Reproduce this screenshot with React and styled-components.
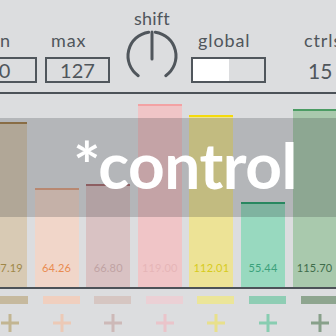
import React from "react";
import styled, { createGlobalStyle } from "styled-components";

const GlobalStyle = createGlobalStyle`
  html, body { margin: 0; padding: 0; background: #dcdddf; }
  body { font-family: "Lato", "Noto Sans", sans-serif; color: #50565c; }
`;

const Frame = styled.div`
  width: 336px;
  height: 336px;
  overflow: hidden;
  background: #dcdddf;
`;

const Header = styled.div`
  display: flex;
  align-items: flex-start;
  height: 92px;
  margin-left: -28px;
`;

const Group = styled.div`
  display: flex;
  flex-direction: column;
  align-items: ${(p) => (p.$center ? "center" : "flex-start")};
  padding-top: ${(p) => p.$top}px;
  margin-left: ${(p) => p.$gap}px;
  width: ${(p) => p.$w}px;
  flex: none;
`;

const Label = styled.div`
  font-size: 18px;
  line-height: 18px;
  height: 18px;
  color: #50565c;
  letter-spacing: ${(p) => p.$ls ?? 0.9}px;
  padding-left: ${(p) => p.$indent || 0}px;
  white-space: nowrap;
`;

const NumBox = styled.div`
  box-sizing: border-box;
  margin-top: 8px;
  width: ${(p) => p.$w}px;
  height: 26px;
  border: 2px solid #50565c;
  display: flex;
  align-items: center;
  justify-content: center;
  font-size: 20px;
  color: #50565c;
`;

const PlainNum = styled.div`
  margin-top: 8px;
  height: 26px;
  padding-left: 4px;
  display: flex;
  align-items: center;
  font-size: 21px;
  color: #50565c;
`;

const Toggle = styled.div`
  box-sizing: border-box;
  margin-top: 8px;
  width: 75px;
  height: 26px;
  border: 2px solid #50565c;
  display: flex;
`;

const ToggleHalf = styled.div`
  flex: 1;
  background: ${(p) => (p.$on ? "#ffffff" : "transparent")};
`;

const DialSvg = styled.svg`
  display: block;
  margin-top: 3px;
`;

const Divider = styled.div`
  height: 2px;
  background: #4c5258;
`;

const BarsArea = styled.div`
  position: relative;
  height: 193px;
`;

const BarsRow = styled.div`
  display: flex;
  align-items: flex-end;
  height: 100%;
  gap: 7.6px;
  margin-left: -17px;
`;

const Bar = styled.div`
  box-sizing: border-box;
  flex: none;
  width: 44px;
  background: ${(p) => p.$fill};
  border-top: 2px solid ${(p) => p.$line};
  display: flex;
  flex-direction: column;
  justify-content: flex-end;
  align-items: center;
  padding-bottom: 13px;
`;

const BarValue = styled.span`
  font-size: 11px;
  line-height: 12px;
  letter-spacing: 0.2px;
  color: ${(p) => p.$color};
`;

const Overlay = styled.div`
  position: absolute;
  left: 0;
  right: 0;
  top: 24px;
  height: 99px;
  background: rgba(40, 44, 50, 0.22);
  display: flex;
  align-items: center;
  justify-content: center;
`;

const Title = styled.div`
  font-family: "Lato", "Noto Sans", sans-serif;
  font-weight: 700;
  font-size: 64px;
  line-height: 64px;
  color: #ffffff;
  letter-spacing: -0.5px;
  margin-left: 34px;
  margin-top: -6px;
`;

const BottomLine = styled.div`
  height: 2px;
  background: #4c5258;
`;

const SwatchRow = styled.div`
  display: flex;
  gap: 14.6px;
  margin-left: -9px;
  margin-top: 7px;
`;

const Swatch = styled.div`
  flex: none;
  width: 37px;
  height: 8px;
  background: ${(p) => p.$color};
`;

const PlusRow = styled.div`
  display: flex;
  gap: 33.6px;
  margin-left: 1px;
  margin-top: 10px;
`;

const PlusSvg = styled.svg`
  flex: none;
  display: block;
`;

const bars = [
  { v: 107.19, fill: "#d8cab4", line: "#a47f4b", text: "#9e8748", sw: "#c6b99e", plus: "#c2b592" },
  { v: 64.26, fill: "#f1d6c9", line: "#e0a283", text: "#e98b50", sw: "#f0cfbf", plus: "#ecc9b6" },
  { v: 66.8, fill: "#d9c2c3", line: "#a96e70", text: "#c0a3a3", sw: "#d6c6c2", plus: "#cdb9b8" },
  { v: 119.0, fill: "#f0c5c7", line: "#f3a2a4", text: "#e6b5b7", sw: "#ebd0d5", plus: "#eac4ca" },
  { v: 112.01, fill: "#ede396", line: "#f4da0c", text: "#d7cb1c", sw: "#ebe59a", plus: "#e8e08c" },
  { v: 55.44, fill: "#98d9bf", line: "#28a06e", text: "#3ba17b", sw: "#8fcdb4", plus: "#88cdb1" },
  { v: 115.7, fill: "#a9c9ad", line: "#4c9c64", text: "#3e6c4a", sw: "#8ea58f", plus: "#87a08a" },
];

function Dial() {
  const cx = 28, cy = 26, r = 24;
  const pt = (deg) => {
    const a = (deg * Math.PI) / 180;
    return [cx + r * Math.sin(a), cy - r * Math.cos(a)];
  };
  const [lx1, ly1] = pt(-145);
  const [lx2, ly2] = pt(-8);
  const [rx1, ry1] = pt(8);
  const [rx2, ry2] = pt(145);
  return (
    <DialSvg width="56" height="54" viewBox="0 0 56 54">
      <path d={`M ${lx1} ${ly1} A ${r} ${r} 0 0 1 ${lx2} ${ly2}`} fill="none" stroke="#50565c" strokeWidth="3" strokeLinecap="round" />
      <path d={`M ${rx1} ${ry1} A ${r} ${r} 0 0 1 ${rx2} ${ry2}`} fill="none" stroke="#50565c" strokeWidth="3" strokeLinecap="round" />
      <line x1={cx} y1={cy - r} x2={cx} y2={cy + 3} stroke="#50565c" strokeWidth="3" strokeLinecap="round" />
    </DialSvg>
  );
}

function Plus({ color }) {
  return (
    <PlusSvg width="18" height="18" viewBox="0 0 18 18">
      <rect x="7.5" y="0" width="3" height="18" fill={color} />
      <rect x="0" y="7.5" width="18" height="3" fill={color} />
    </PlusSvg>
  );
}

export default function App() {
  return (
    <>
      <GlobalStyle />
      <Frame>
        <Header>
          <Group $top={31} $gap={0} $w={65}>
            <Label $indent={7}>min</Label>
            <NumBox $w={65}>0</NumBox>
          </Group>
          <Group $top={31} $gap={8} $w={65}>
            <Label $indent={6}>max</Label>
            <NumBox $w={65}>127</NumBox>
          </Group>
          <Group $top={9} $gap={14} $w={56} $center>
            <Label $ls={0.2}>shift</Label>
            <Dial />
          </Group>
          <Group $top={31} $gap={11} $w={75}>
            <Label $indent={7}>global</Label>
            <Toggle>
              <ToggleHalf $on />
              <ToggleHalf />
            </Toggle>
          </Group>
          <Group $top={31} $gap={38} $w={60}>
            <Label>ctrls</Label>
            <PlainNum>15</PlainNum>
          </Group>
        </Header>
        <Divider />
        <BarsArea>
          <BarsRow>
            {bars.map((b, i) => (
              <Bar key={i} $fill={b.fill} $line={b.line} style={{ height: `${(b.v / 127) * 195}px` }}>
                <BarValue $color={b.text}>{b.v.toFixed(2)}</BarValue>
              </Bar>
            ))}
          </BarsRow>
          <Overlay>
            <Title>*control</Title>
          </Overlay>
        </BarsArea>
        <BottomLine />
        <SwatchRow>
          {bars.map((b, i) => (
            <Swatch key={i} $color={b.sw} />
          ))}
        </SwatchRow>
        <PlusRow>
          {bars.map((b, i) => (
            <Plus key={i} color={b.plus} />
          ))}
        </PlusRow>
      </Frame>
    </>
  );
}
